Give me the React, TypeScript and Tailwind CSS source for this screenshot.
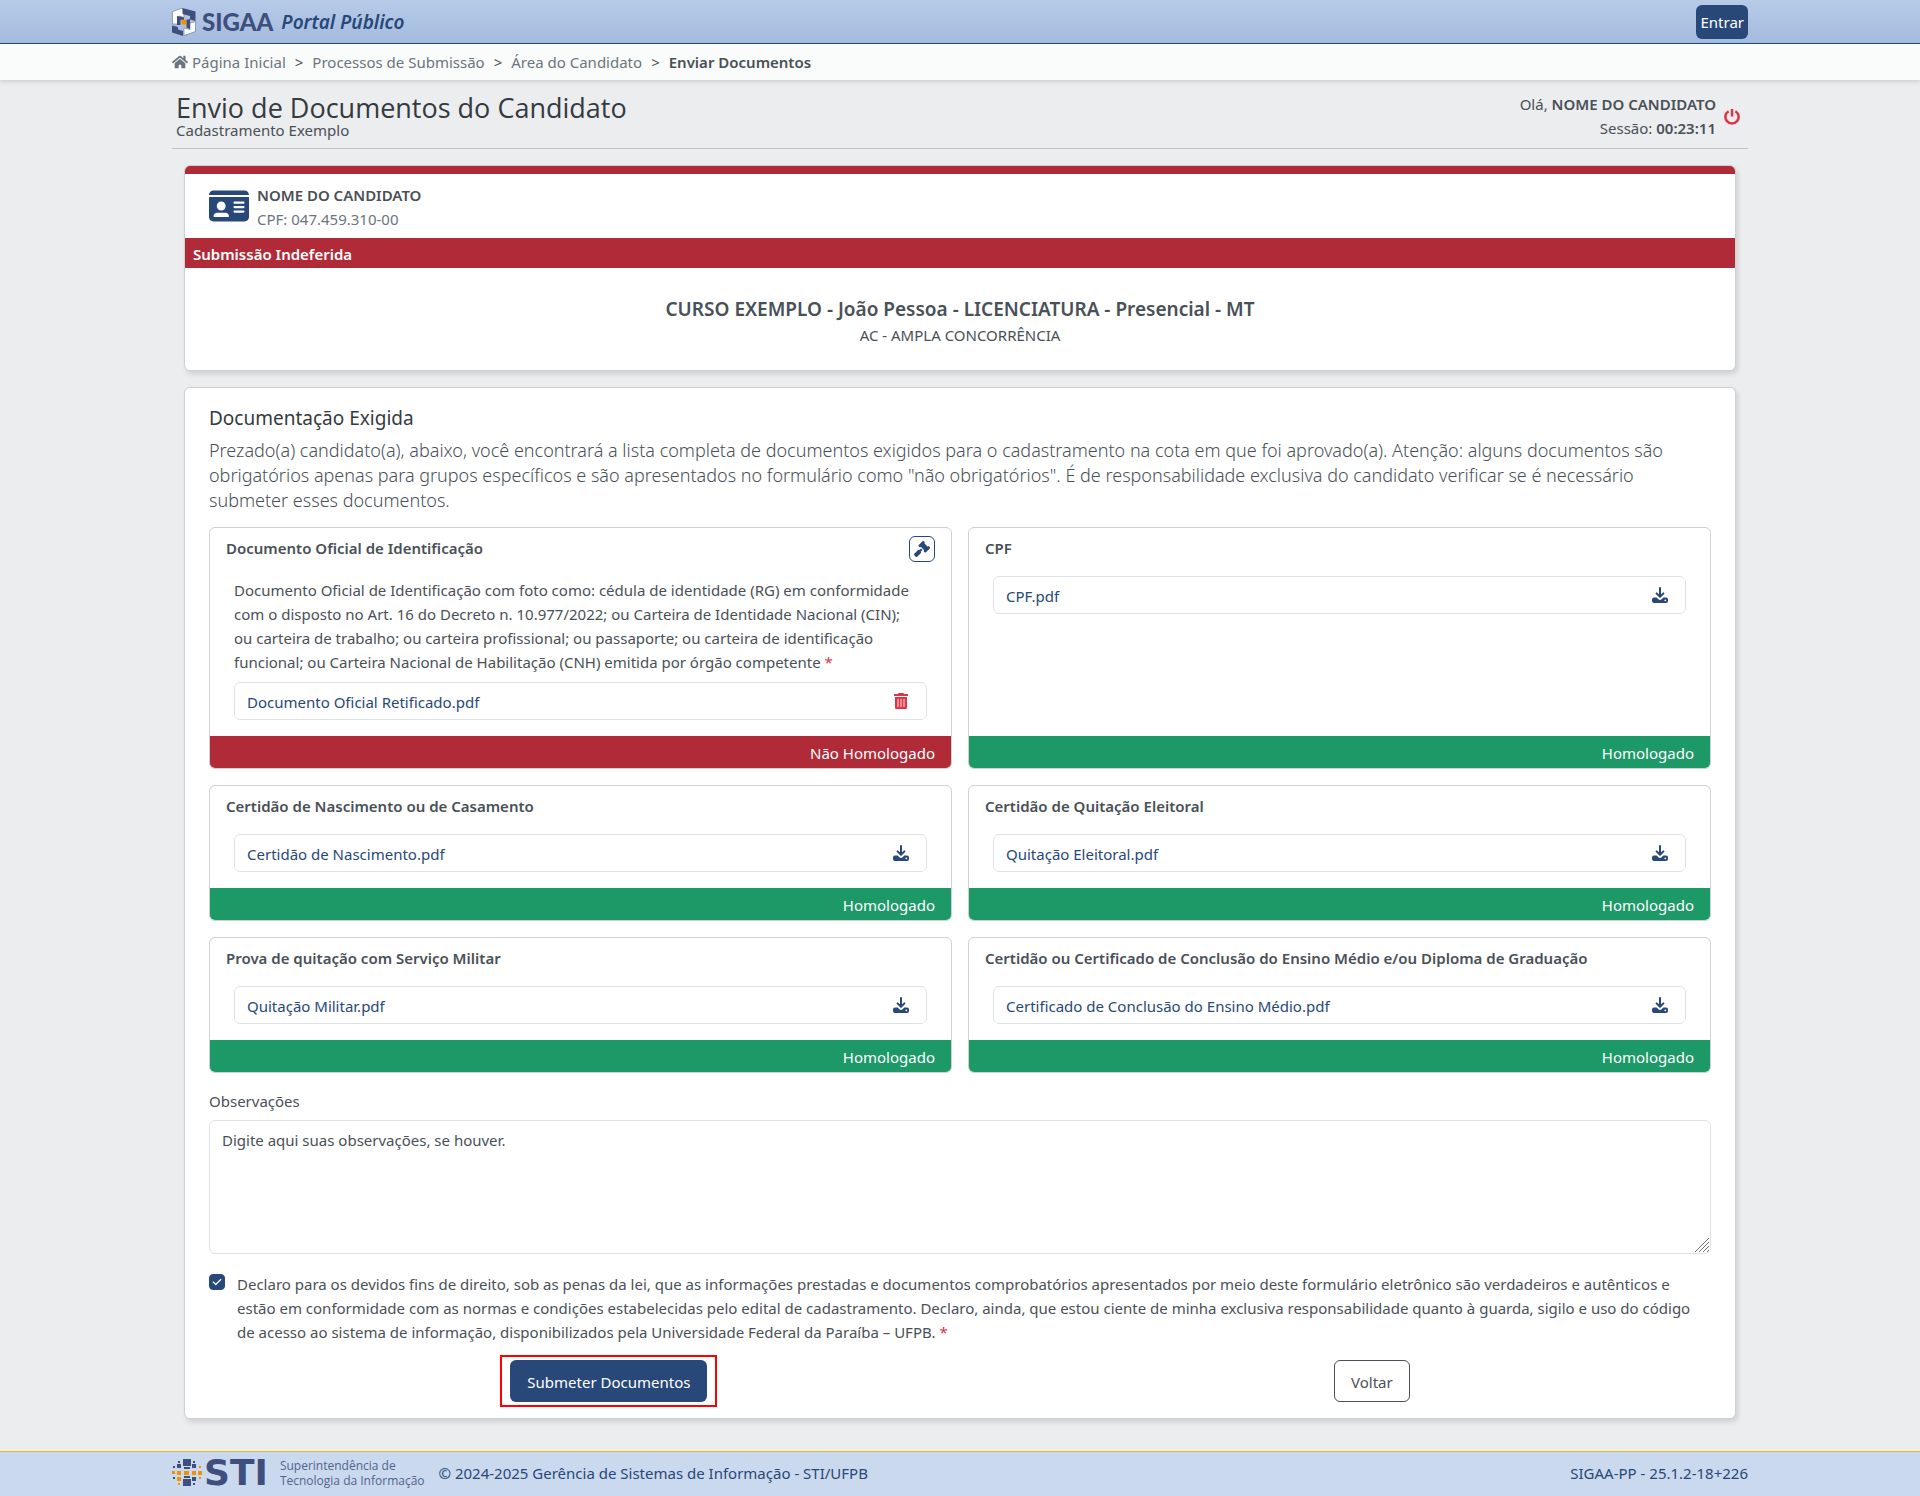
import {useState, type ReactNode} from 'react';
import {FaHome} from 'react-icons/fa';
import {FaIdCard, FaGavel, FaCheck} from 'react-icons/fa6';

type Doc = {
  title: string;
  file: string;
  approved: boolean;
  description?: string;
};

const docs: Doc[] = [
  {
    title: 'Documento Oficial de Identificação',
    file: 'Documento Oficial Retificado.pdf',
    approved: false,
    description:
      'Documento Oficial de Identificação com foto como: cédula de identidade (RG) em conformidade com o disposto no Art. 16 do Decreto n. 10.977/2022; ou Carteira de Identidade Nacional (CIN); ou carteira de trabalho; ou carteira profissional; ou passaporte; ou carteira de identificação funcional; ou Carteira Nacional de Habilitação (CNH) emitida por órgão competente',
  },
  {title: 'CPF', file: 'CPF.pdf', approved: true},
  {title: 'Certidão de Nascimento ou de Casamento', file: 'Certidão de Nascimento.pdf', approved: true},
  {title: 'Certidão de Quitação Eleitoral', file: 'Quitação Eleitoral.pdf', approved: true},
  {title: 'Prova de quitação com Serviço Militar', file: 'Quitação Militar.pdf', approved: true},
  {
    title: 'Certidão ou Certificado de Conclusão do Ensino Médio e/ou Diploma de Graduação',
    file: 'Certificado de Conclusão do Ensino Médio.pdf',
    approved: true,
  },
];

const crumbs = ['Processos de Submissão', 'Área do Candidato'];

function Container({children, className = ''}: {children: ReactNode; className?: string}) {
  return <div className={`mx-auto w-full max-w-[1600px] px-3 ${className}`}>{children}</div>;
}

function SigaaLogo() {
  return (
    <svg width="24" height="28" viewBox="0 0 24 28" aria-hidden="true">
      <path d="M.5 3.500 9 .5l3 1v8L7 8v8H.5z" fill="#fff" stroke="#6f7ea6" strokeWidth=".7" />
      <path d="M10.500 0 23.500 3.500V13L18 11.500V8l-7.500-2z" fill="#3f4f7d" />
      <path d="M0 17.500 6 19v2.500l5 1.500v5L0 24.500z" fill="#3f4f7d" />
      <path d="M12 20v7.500l11.500-4V13.500L18 15v6.500z" fill="#fff" stroke="#6f7ea6" strokeWidth=".7" />
      <path d="M5 8l7 1.500V12H8.500v5H5zM14 12l4-1v10l-3.500-1.500V16.500z" fill="#3f4f7d" />
      <rect x="9.500" y="11.500" width="5" height="5" fill="#f39200" />
    </svg>
  );
}

function StiLogo() {
  return (
    <svg width="30" height="28" viewBox="0 0 30 28" aria-hidden="true">
      <g fill="#3f4f7d">
        <path d="M11 0h8v7h-8zM11 20h8v7h-8z" />
        <path d="M5 5h4v4H5zM20 5h4v4h-4zM20 18h4v4h-4zM12 8h6v2h-6zM12 17h6v2h-6z" />
        <path d="M6 2h2v2H6zM21 2h2v2h-2zM21 24h2v2h-2zM1 7h2v2H1zM1 18h2v2H1z" />
      </g>
      <g fill="#f39200">
        <path d="M0 12h3v3H0zM5 12h4v4H5zM5 18h4v4H5zM12 12h5v4h-5zM20 12h4v4h-4zM26 12h4v4h-4z" />
        <path d="M27 7h2v2h-2zM27 18h2v2h-2zM6 24h2v2H6z" />
      </g>
    </svg>
  );
}

function PowerIcon() {
  return (
    <svg width="16" height="17" viewBox="0 0 16 17" fill="none" stroke="#dc3545" strokeWidth="2.500" aria-hidden="true">
      <path d="M8 1v7.500" />
      <path d="M4.600 3.200a6.600 6.600 0 1 0 6.800 0" />
    </svg>
  );
}

function DownloadIcon() {
  return (
    <svg width="16" height="16" viewBox="0 0 16 16" fill="none" aria-hidden="true">
      <path d="M8 1v8M4.600 6.400 8 9.800l3.400-3.400" stroke="#274878" strokeWidth="2" strokeLinecap="round" strokeLinejoin="round" />
      <path
        d="M2 10.500h2.600l1.800 1.700a2.300 2.300 0 0 0 3.200 0l1.800-1.700H14a2 2 0 0 1 2 2V14a2 2 0 0 1-2 2H2a2 2 0 0 1-2-2v-1.500a2 2 0 0 1 2-2z"
        fill="#274878"
      />
      <circle cx="13.300" cy="13.300" r=".9" fill="#fff" />
    </svg>
  );
}

function TrashIcon() {
  return (
    <svg width="14" height="16" viewBox="0 0 14 16" aria-hidden="true">
      <path d="M4.500 0h5l.6 1H14v2H0V1h3.900z" fill="#dc3545" />
      <path d="M1 4h12v10.500a1.500 1.500 0 0 1-1.500 1.500h-9A1.500 1.500 0 0 1 1 14.500z" fill="#dc3545" />
      <path d="M4 6v8M7 6v8M10 6v8" stroke="#fff" strokeOpacity=".6" strokeWidth="1.500" />
    </svg>
  );
}

function DocumentCard({doc}: {doc: Doc}) {
  return (
    <article className="flex flex-col overflow-hidden rounded-md border border-[#ced0d3] bg-white">
      <div className="flex grow flex-col pt-2 pb-4">
        <div className="flex items-start justify-between px-4">
          <h3 className="pt-px leading-[23px] font-semibold">{doc.title}</h3>
          {!doc.approved && (
            <button
              type="button"
              aria-label="Ver parecer"
              className="flex size-[26px] items-center justify-center rounded-md border border-[#274878] text-[#274878]"
            >
              <FaGavel size={16} />
            </button>
          )}
        </div>
        {doc.description && (
          <p className="mt-4 -mb-2 pr-8 pl-6">
            {doc.description} <span className="text-[#dc3545]">*</span>
          </p>
        )}
        <div className="mx-6 mt-4 flex h-[38px] items-center justify-between rounded-md border border-[#dee2e6] px-3">
          <a href="#" className="pt-px text-[#274878]">{doc.file}</a>
          <button type="button" aria-label={doc.approved ? 'Baixar arquivo' : 'Remover arquivo'} className="mr-[5px] flex w-4 justify-center">
            {doc.approved ? <DownloadIcon /> : <TrashIcon />}
          </button>
        </div>
      </div>
      <div
        className={`flex h-8 items-center justify-end px-4 pt-px text-white ${
          doc.approved ? 'bg-[#1c9967]' : 'bg-[#b02a37]'
        }`}
      >
        {doc.approved ? 'Homologado' : 'Não Homologado'}
      </div>
    </article>
  );
}

export default function App() {
  const [notes, setNotes] = useState('');
  const [agreed, setAgreed] = useState(true);

  return (
    <div className="flex min-h-screen flex-col bg-[#ecedef] font-['Noto_Sans','Open_Sans',sans-serif] text-[15px] leading-6 text-[#495057]">
      <header className="border-b border-[#274878] bg-linear-to-b from-[#b7cae8] to-[#a3bbdf]">
        <Container className="flex h-[43px] items-center justify-between">
          <a href="#" className="flex items-center">
            <SigaaLogo />
            <span className="ml-[6px] font-['Lato',sans-serif] text-[24px] font-black text-[#3f4f7d]">SIGAA</span>
            <span className="ml-2 text-[19px] font-semibold text-[#274878] italic">Portal Público</span>
          </a>
          <button type="button" className="h-[34px] rounded-md bg-[#274878] px-1 text-white">
            Entrar
          </button>
        </Container>
      </header>

      <nav aria-label="Trilha" className="bg-[#fafcfb] shadow-[0_2px_4px_rgba(0,0,0,0.12)]">
        <Container className="flex h-9 items-center gap-[9px]">
          <a href="#" className="flex items-center gap-1 text-[#6c757d]">
            <FaHome size={16} />
            Página Inicial
          </a>
          {crumbs.map((crumb) => (
            <span key={crumb} className="flex gap-[9px]">
              <span>&gt;</span>
              <a href="#" className="text-[#6c757d]">{crumb}</a>
            </span>
          ))}
          <span>&gt;</span>
          <span className="font-semibold">Enviar Documentos</span>
        </Container>
      </nav>

      <main className="grow pb-8">
        <Container>
          <div className="flex h-[69px] items-center justify-between border-b border-[#c0c3c6] pt-1 pr-2 pl-1">
            <div>
              <h1 className="font-['Open_Sans',sans-serif] text-[27px] leading-8 text-[#343a40]">
                Envio de Documentos do Candidato
              </h1>
              <p className="-mt-1 leading-5">Cadastramento Exemplo</p>
            </div>
            <div className="flex items-center gap-2 text-right">
              <div>
                <p>Olá, <strong className="font-semibold">NOME DO CANDIDATO</strong></p>
                <p>Sessão: <strong className="font-semibold">00:23:11</strong></p>
              </div>
              <button type="button" aria-label="Sair">
                <PowerIcon />
              </button>
            </div>
          </div>

          <div className="flex flex-col gap-4 px-3 pt-4">
            <section className="overflow-hidden rounded-md border border-[#ced0d3] bg-white shadow-[2px_3px_5px_rgba(0,0,0,0.13)]">
              <div className="flex h-[72px] items-center gap-2 border-t-8 border-[#b02a37] px-6">
                <FaIdCard size={40} className="text-[#274878]" />
                <div className="pt-[2px]">
                  <h2 className="font-semibold">NOME DO CANDIDATO</h2>
                  <p className="text-[#6c757d]">CPF: 047.459.310-00</p>
                </div>
              </div>
              <p className="bg-[#b02a37] px-2 pt-1 pb-[2px] font-semibold text-white">Submissão Indeferida</p>
              <div className="pt-[27px] pb-[23px] text-center">
                <h2 className="text-[19px] leading-7 font-semibold">
                  CURSO EXEMPLO - João Pessoa - LICENCIATURA - Presencial - MT
                </h2>
                <p>AC - AMPLA CONCORRÊNCIA</p>
              </div>
            </section>

            <section className="rounded-md border border-[#ced0d3] bg-white px-6 py-4 shadow-[2px_3px_5px_rgba(0,0,0,0.13)]">
              <h2 className="mt-[2px] text-[19px] leading-6 text-[#343a40]">Documentação Exigida</h2>
              <p className="mt-2 mb-[14px] text-[18px] leading-[25px] font-light">
                Prezado(a) candidato(a), abaixo, você encontrará a lista completa de documentos exigidos para o
                cadastramento na cota em que foi aprovado(a). Atenção: alguns documentos são obrigatórios apenas para
                grupos específicos e são apresentados no formulário como "não obrigatórios". É de responsabilidade
                exclusiva do candidato verificar se é necessário submeter esses documentos.
              </p>

              <div className="grid grid-cols-2 gap-4">
                {docs.map((doc) => (
                  <DocumentCard key={doc.title} doc={doc} />
                ))}
              </div>

              <label htmlFor="notes" className="mt-4 mb-[7px] block">Observações</label>
              <div className="relative">
                <textarea
                  id="notes"
                  rows={5}
                  value={notes}
                  onChange={(e) => setNotes(e.target.value)}
                  placeholder="Digite aqui suas observações, se houver."
                  className="block h-[134px] w-full rounded-md border border-[#dee2e6] px-3 py-[7px] placeholder:text-[#495057] [&::-webkit-resizer]:hidden"
                />
                <svg
                  width="14"
                  height="14"
                  viewBox="0 0 14 14"
                  stroke="#6f6f6f"
                  aria-hidden="true"
                  className="pointer-events-none absolute right-[2px] bottom-[2px]"
                >
                  <path d="M0 14 14 0M4 14 14 4M8 14l6-6M12 14l2-2" />
                </svg>
              </div>

              <div className="mt-[18px] flex gap-3">
                <span className="relative mt-[2px] size-4 shrink-0">
                  <input
                    id="agree"
                    type="checkbox"
                    checked={agreed}
                    onChange={(e) => setAgreed(e.target.checked)}
                    className="block size-4 appearance-none rounded-sm border border-[#274878] checked:bg-[#274878]"
                  />
                  {agreed && <FaCheck size={10} className="pointer-events-none absolute top-[3px] left-[3px] text-white" />}
                </span>
                <label htmlFor="agree">
                  Declaro para os devidos fins de direito, sob as penas da lei, que as informações prestadas e documentos
                  comprobatórios apresentados por meio deste formulário eletrônico são verdadeiros e autênticos e estão em
                  conformidade com as normas e condições estabelecidas pelo edital de cadastramento. Declaro, ainda, que
                  estou ciente de minha exclusiva responsabilidade quanto à guarda, sigilo e uso do código de acesso ao
                  sistema de informação, disponibilizados pela Universidade Federal da Paraíba – UFPB.{' '}
                  <span className="text-[#dc3545]">*</span>
                </label>
              </div>

              <div className="-mx-3 mt-4 flex justify-around">
                <div className="relative">
                  <button type="button" className="h-[42px] rounded-md bg-[#274878] px-[17px] pt-[2px] text-white">
                    Submeter Documentos
                  </button>
                  <span className="pointer-events-none absolute -inset-x-[10px] -inset-y-[5px] border-2 border-[#f00]" />
                </div>
                <button type="button" className="h-[42px] rounded-md border border-[#495057] px-4 pt-[2px]">
                  Voltar
                </button>
              </div>
            </section>
          </div>
        </Container>
      </main>

      <footer className="border-t border-[#e9b92a] bg-[#cbd9ee] text-[#274878]">
        <Container className="flex h-11 items-center pb-[2px]">
          <StiLogo />
          <span className="ml-[2px] font-['DejaVu_Sans',sans-serif] text-[36px] leading-none font-bold text-[#3f4f7d]">STI</span>
          <span className="ml-3 font-['Open_Sans',sans-serif] text-[12px] leading-[15px] text-[#52638f]">
            Superintendência de
            <br />
            Tecnologia da Informação
          </span>
          <span className="ml-[14px]">© 2024-2025 Gerência de Sistemas de Informação - STI/UFPB</span>
          <span className="ml-auto">SIGAA-PP - 25.1.2-18+226</span>
        </Container>
      </footer>
    </div>
  );
}
